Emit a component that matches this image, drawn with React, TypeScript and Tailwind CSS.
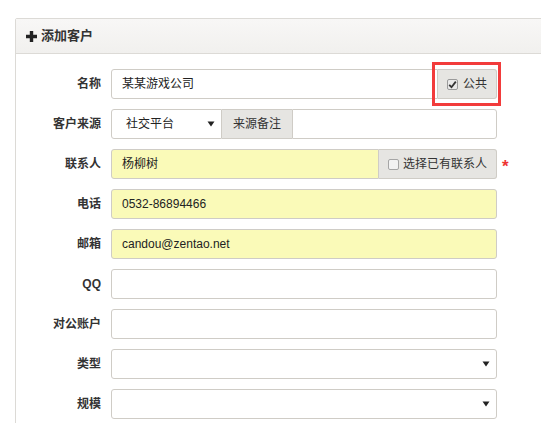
import React from "react";

const font = { fontFamily: '"Liberation Sans", "Noto Sans CJK SC", sans-serif' };

function Label({ children }: { children: React.ReactNode }) {
  return (
    <div className="w-[95px] shrink-0 pr-[10px] text-right text-[12px] font-bold text-[#333]">{children}</div>
  );
}

function Caret() {
  return (
    <svg width="8" height="6" viewBox="0 0 8 6" className="shrink-0">
      <path d="M0.5 0.5 L7.5 0.5 L4 5.5 Z" fill="#222" />
    </svg>
  );
}

function Row({ children }: { children: React.ReactNode }) {
  return <div className="flex items-center h-[30px] mb-[10px]">{children}</div>;
}

export default function App() {
  return (
    <div className="w-[541px] h-[423px] bg-white overflow-hidden" style={font}>
      <div className="ml-[15px] mt-[18px] w-[560px] border border-[#dcdad6] rounded-[2px]">
        <div className="h-[35px] flex items-center pl-[10px] border-b border-[#dcdad6] bg-gradient-to-b from-[#f8f7f6] to-[#f1f0ee] text-[13px] font-bold text-[#333]">
          <svg width="11" height="11" viewBox="0 0 11 11" className="mr-[4px]">
            <path d="M3.8 0 H7.2 V3.8 H11 V7.2 H7.2 V11 H3.8 V7.2 H0 V3.8 H3.8 Z" fill="#222" />
          </svg>
          添加客户
        </div>
        <div className="pt-[15px] pb-[10px]">
          <Row>
            <Label>名称</Label>
            <div className="flex h-[30px] w-[386px]">
              <div className="flex-1 flex items-center border border-[#cfccc6] rounded-l-[3px] pl-[10px] text-[12px] text-[#222] bg-white">
                某某游戏公司
              </div>
              <div className="relative w-[59px] flex items-center justify-center gap-[5px] bg-[#e6e5e2] border border-l-0 border-[#cfccc6] rounded-r-[3px] text-[12px] text-[#333]">
                <span className="w-[11px] h-[11px] rounded-[2px] border border-[#9a9a9a] bg-[#e9e9e9] flex items-center justify-center">
                  <svg width="9" height="9" viewBox="0 0 9 9">
                    <path d="M1.2 4.8 L3.5 7.2 L7.8 1.6" stroke="#333" strokeWidth="1.8" fill="none" />
                  </svg>
                </span>
                <span>公共</span>
                <div className="absolute left-[-6px] right-[-5px] top-[-8px] bottom-[-8px] border-[3px] border-[#f23b3b]" />
              </div>
            </div>
          </Row>
          <Row>
            <Label>客户来源</Label>
            <div className="flex h-[30px] w-[386px]">
              <div className="w-[111px] flex items-center justify-between border border-[#cfccc6] rounded-l-[3px] pl-[14px] pr-[6px] text-[12px] text-[#222] bg-white">
                <span>社交平台</span>
                <Caret />
              </div>
              <div className="w-[70px] flex items-center justify-center bg-[#e6e5e2] border-y border-[#cfccc6] text-[12px] text-[#333]">
                来源备注
              </div>
              <div className="flex-1 border border-[#cfccc6] rounded-r-[3px] bg-white" />
            </div>
          </Row>
          <Row>
            <Label>联系人</Label>
            <div className="flex h-[30px] w-[386px]">
              <div className="flex-1 flex items-center border border-[#cfccc6] rounded-l-[3px] pl-[10px] text-[12px] text-[#222] bg-[#fafab8]">
                杨柳树
              </div>
              <div className="w-[118px] flex items-center justify-center gap-[4px] bg-[#e6e5e2] border border-l-0 border-[#cfccc6] rounded-r-[3px] text-[12px] text-[#333]">
                <span className="w-[11px] h-[11px] rounded-[2px] border border-[#a5a5a5] bg-[#f2f2f2]" />
                <span>选择已有联系人</span>
              </div>
            </div>
            <span className="ml-[5px] mt-[4px] text-[17px] font-bold text-[#ee3333] leading-none">*</span>
          </Row>
          <Row>
            <Label>电话</Label>
            <div className="w-[386px] h-[30px] flex items-center border border-[#cfccc6] rounded-[3px] pl-[10px] text-[12px] text-[#222] bg-[#fafab8]">
              0532-86894466
            </div>
          </Row>
          <Row>
            <Label>邮箱</Label>
            <div className="w-[386px] h-[30px] flex items-center border border-[#cfccc6] rounded-[3px] pl-[10px] text-[12px] text-[#222] bg-[#fafab8]">
              candou@zentao.net
            </div>
          </Row>
          <Row>
            <Label>QQ</Label>
            <div className="w-[386px] h-[30px] border border-[#cfccc6] rounded-[3px] bg-white" />
          </Row>
          <Row>
            <Label>对公账户</Label>
            <div className="w-[386px] h-[30px] border border-[#cfccc6] rounded-[3px] bg-white" />
          </Row>
          <Row>
            <Label>类型</Label>
            <div className="w-[386px] h-[30px] flex items-center justify-end pr-[6px] border border-[#cfccc6] rounded-[3px] bg-white">
              <Caret />
            </div>
          </Row>
          <Row>
            <Label>规模</Label>
            <div className="w-[386px] h-[30px] flex items-center justify-end pr-[6px] border border-[#cfccc6] rounded-[3px] bg-white">
              <Caret />
            </div>
          </Row>
        </div>
      </div>
    </div>
  );
}
